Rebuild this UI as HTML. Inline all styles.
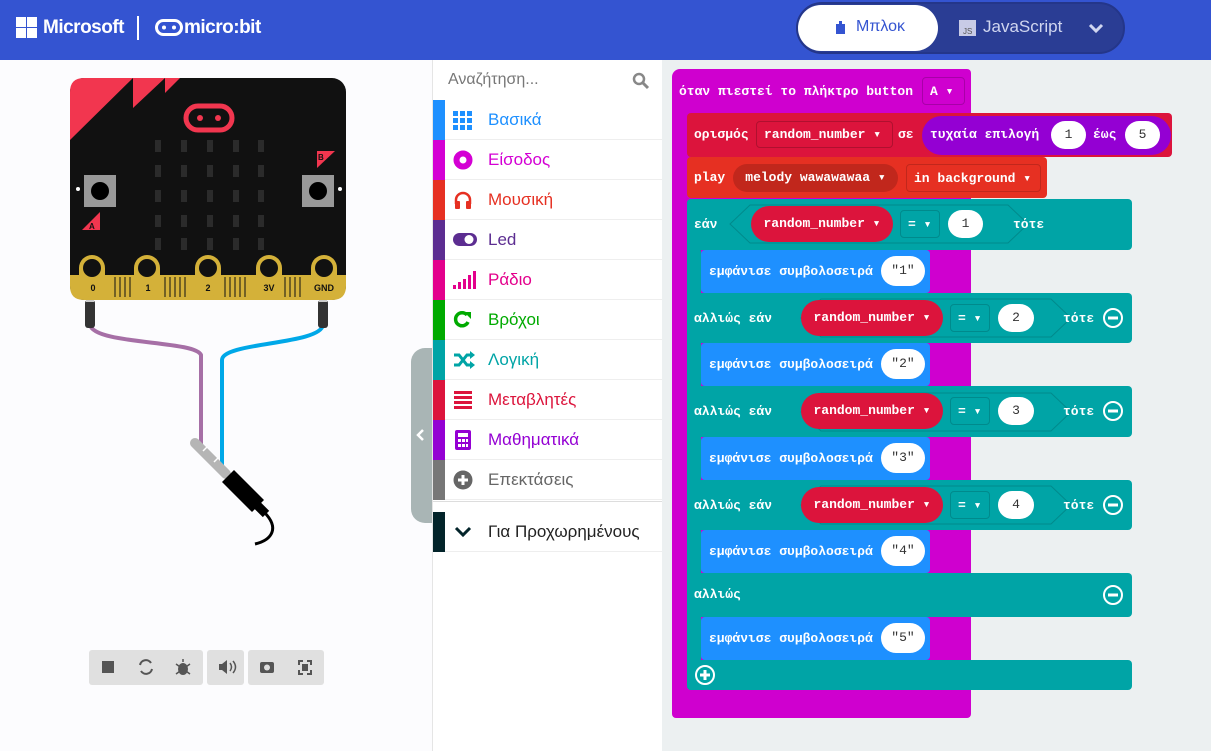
<!DOCTYPE html>
<html><head><meta charset="utf-8"><style>
*{box-sizing:border-box;margin:0;padding:0}
body{width:1211px;height:751px;overflow:hidden;position:relative;font-family:"Liberation Sans","Noto Sans CJK SC",sans-serif;background:#fcfcfe}
.a{position:absolute}
.hdr{left:0;top:0;width:1211px;height:60px;background:#3454d1}
.ws{left:662px;top:60px;width:549px;height:691px;background:#ecf0f1}
.tb{left:432px;top:60px;width:230px;height:691px;background:#fff;border-left:1px solid #e5e5e5}
.it{position:absolute;left:0;width:230px;height:40px;border-bottom:1px solid #eee;font-size:17px;line-height:40px}
.it .s{position:absolute;left:0;top:0;width:12px;height:40px}
.it .t{position:absolute;left:55px}
.it svg{position:absolute;left:20px;top:10px}
.bk{position:absolute;font-family:"Liberation Mono",monospace;font-weight:bold;font-size:13px;color:#fff;white-space:nowrap}
.blk{position:absolute;border-radius:4px}
.pill{position:absolute;border-radius:15px;font-family:"Liberation Mono",monospace;font-weight:bold;font-size:13px;color:#fff;text-align:center;white-space:nowrap}
.wp{background:#fff;color:#333;font-weight:normal}
.dd{position:absolute;border-radius:4px;font-family:"Liberation Mono",monospace;font-weight:bold;font-size:13px;color:#fff;white-space:nowrap;padding-left:7px}
</style></head><body>
<div class="a hdr">
 <svg class="a" style="left:16px;top:17px" width="21" height="21"><rect x="0" y="0" width="10" height="10" fill="#fff"/><rect x="11" y="0" width="10" height="10" fill="#fff"/><rect x="0" y="11" width="10" height="10" fill="#fff"/><rect x="11" y="11" width="10" height="10" fill="#fff"/></svg>
 <div class="a" style="left:43px;top:17px;color:#fff;font-size:19px;font-weight:bold;letter-spacing:-0.5px">Microsoft</div>
 <div class="a" style="left:137px;top:16px;width:2px;height:24px;background:#fff"></div>
 <svg class="a" style="left:155px;top:19px" width="30" height="18"><rect x="1.5" y="1.5" width="25" height="14" rx="7" fill="none" stroke="#fff" stroke-width="3"/><circle cx="9" cy="8.5" r="2" fill="#fff"/><circle cx="19" cy="8.5" r="2" fill="#fff"/></svg>
 <div class="a" style="left:184px;top:17px;color:#fff;font-size:19px;font-weight:bold;letter-spacing:-0.5px">micro:bit</div>
 <div class="a" style="left:796px;top:2px;width:329px;height:52px;border-radius:26px;background:#2a3d94;border:2px solid #24368a"></div>
 <div class="a" style="left:798px;top:5px;width:140px;height:46px;border-radius:23px;background:#fff"></div>
 <svg class="a" style="left:834px;top:20px" width="12" height="15"><path d="M2 4h3V1h3v3h3v10H2z" fill="#3454d1"/></svg>
 <div class="a" style="left:856px;top:18px;color:#3454d1;font-size:16px">Μπλοκ</div>
 <div class="a" style="left:959px;top:20px;width:17px;height:16px;background:#c8cbe6;font-size:8px;color:#555;padding:7px 0 0 4px">JS</div>
 <div class="a" style="left:983px;top:17px;color:#d0d6f0;font-size:17px">JavaScript</div>
 <svg class="a" style="left:1088px;top:22px" width="16" height="12"><path d="M2 3l6 6 6-6" stroke="#d0d6f0" stroke-width="3" fill="none"/></svg>
</div>

<svg class="a" style="left:0;top:60px" width="411" height="691">
 <path d="M90 265 C95 285 195 280 201 295 L201 385" stroke="#a66fa6" stroke-width="4" fill="none"/>
 <path d="M323 265 C320 285 222 282 222 300 L222 412" stroke="#00a8e8" stroke-width="4" fill="none"/>
 <path d="M195 383 L226 414" stroke="#b5b5b5" stroke-width="10" stroke-linecap="round"/>
 <path d="M203 391l4-4M214 402l4-4" stroke="#fff" stroke-width="1.5"/>
 <path d="M228 416 L258 446" stroke="#000" stroke-width="17"/>
 <path d="M255 443 L266 454" stroke="#000" stroke-width="9"/>
 <path d="M264 452 C 280 468 272 480 255 484" stroke="#000" stroke-width="3" fill="none"/>
 <rect x="85" y="240" width="10" height="28" rx="3" fill="#333"/>
 <rect x="318" y="240" width="10" height="28" rx="3" fill="#333"/>
 <rect x="86" y="232" width="8" height="10" fill="#ccc"/><rect x="319" y="232" width="8" height="10" fill="#ccc"/>
 <rect x="70" y="18" width="276" height="222" rx="14" fill="#111"/>
 <path d="M70 32 Q70 18 84 18 L133 18 L70 80Z M133 18 L165 18 L133 48Z M165 18 L180 18 L165 33Z" fill="#f2364f"/>
 <rect x="186" y="46" width="46" height="24" rx="12" fill="none" stroke="#f2364f" stroke-width="5"/>
 <circle cx="200" cy="58" r="3" fill="#f2364f"/><circle cx="218" cy="58" r="3" fill="#f2364f"/>
 <g fill="#2b2b2b">
  <rect x="155" y="80" width="6" height="12"/><rect x="181" y="80" width="6" height="12"/><rect x="207" y="80" width="6" height="12"/><rect x="233" y="80" width="6" height="12"/><rect x="258" y="80" width="6" height="12"/>
  <rect x="155" y="105" width="6" height="12"/><rect x="181" y="105" width="6" height="12"/><rect x="207" y="105" width="6" height="12"/><rect x="233" y="105" width="6" height="12"/><rect x="258" y="105" width="6" height="12"/>
  <rect x="155" y="130" width="6" height="12"/><rect x="181" y="130" width="6" height="12"/><rect x="207" y="130" width="6" height="12"/><rect x="233" y="130" width="6" height="12"/><rect x="258" y="130" width="6" height="12"/>
  <rect x="155" y="155" width="6" height="12"/><rect x="181" y="155" width="6" height="12"/><rect x="207" y="155" width="6" height="12"/><rect x="233" y="155" width="6" height="12"/><rect x="258" y="155" width="6" height="12"/>
  <rect x="155" y="178" width="6" height="12"/><rect x="181" y="178" width="6" height="12"/><rect x="207" y="178" width="6" height="12"/><rect x="233" y="178" width="6" height="12"/><rect x="258" y="178" width="6" height="12"/>
 </g>
 <rect x="84" y="115" width="32" height="32" fill="#999"/><circle cx="100" cy="131" r="9" fill="#000"/>
 <rect x="302" y="115" width="32" height="32" fill="#999"/><circle cx="318" cy="131" r="9" fill="#000"/>
 <circle cx="78" cy="129" r="2" fill="#fff"/><circle cx="340" cy="129" r="2" fill="#fff"/>
 <path d="M82 170 L100 152 L100 170Z" fill="#f2364f"/><text x="89" y="169" font-size="8" font-weight="bold" fill="#111" font-family="Liberation Sans">A</text>
 <path d="M317 91 L335 91 L317 108Z" fill="#f2364f"/><text x="318" y="100" font-size="8" font-weight="bold" fill="#111" font-family="Liberation Sans">B</text>
 <path d="M70 215 L346 215 L346 226 Q346 240 332 240 L84 240 Q70 240 70 226Z" fill="#d4b139"/>
 <g stroke="#111" stroke-width="1"><path d="M115 217v20M120 217v20M125 217v20M130 217v20M165 217v20M170 217v20M175 217v20M180 217v20M185 217v20M225 217v20M230 217v20M235 217v20M240 217v20M245 217v20M285 217v20M290 217v20M295 217v20M300 217v20"/></g>
 <g fill="#d4b139"><rect x="79" y="195" width="26" height="42" rx="13"/><rect x="134" y="195" width="26" height="42" rx="13"/><rect x="195" y="195" width="26" height="42" rx="13"/><rect x="256" y="195" width="26" height="42" rx="13"/><rect x="311" y="195" width="26" height="42" rx="13"/></g>
 <g fill="#111"><circle cx="92" cy="208" r="9"/><circle cx="147" cy="208" r="9"/><circle cx="208" cy="208" r="9"/><circle cx="269" cy="208" r="9"/><circle cx="324" cy="208" r="9"/></g>
 <g font-family="Liberation Sans" font-size="9" font-weight="bold" fill="#111" text-anchor="middle"><text x="93" y="231">0</text><text x="148" y="231">1</text><text x="208" y="231">2</text><text x="269" y="231">3V</text><text x="324" y="231">GND</text></g>
 <rect x="89" y="590" width="114" height="35" rx="3" fill="#e0e0e0"/><rect x="207" y="590" width="37" height="35" rx="3" fill="#e0e0e0"/><rect x="248" y="590" width="76" height="35" rx="3" fill="#e0e0e0"/>
 <rect x="102" y="601" width="12" height="12" fill="#555"/>
 <path d="M140 605a6 6 0 0 1 11-2M152 609a6 6 0 0 1-11 2" stroke="#555" stroke-width="2" fill="none"/>
 <ellipse cx="183" cy="609" rx="5" ry="6" fill="#555"/><path d="M176 604l14 10M176 614l14-10M183 602v-3" stroke="#555" stroke-width="1.5"/>
 <path d="M219 604h3l5-4v14l-5-4h-3z" fill="#555"/><path d="M230 603q3 4 0 8M233 601q5 6 0 12" stroke="#555" stroke-width="1.5" fill="none"/>
 <rect x="260" y="602" width="14" height="11" rx="2" fill="#555"/><circle cx="267" cy="607.5" r="3" fill="#e0e0e0"/>
 <path d="M299 605v-4h4M307 601h4v4M311 610v4h-4M303 614h-4v-4" stroke="#555" stroke-width="2" fill="none"/><rect x="302" y="604" width="6" height="7" fill="#555"/>
</svg>

<div class="a" style="left:411px;top:348px;width:22px;height:175px;background:#a9b5b5;border-radius:14px 0 0 14px"></div>
<svg class="a" style="left:416px;top:428px" width="10" height="14"><path d="M7 2l-5 5 5 5" stroke="#fff" stroke-width="2.5" fill="none"/></svg>

<div class="a tb">
 <div class="a" style="left:15px;top:11px;color:#777;font-size:16px">Αναζήτηση...</div>
 <svg class="a" style="left:199px;top:12px" width="18" height="18"><circle cx="7" cy="7" r="5" stroke="#888" stroke-width="2.5" fill="none"/><path d="M11 11l5 5" stroke="#888" stroke-width="3"/></svg>
 <div class="it" style="top:40px;color:#1e90ff"><div class="s" style="background:#1e90ff"></div><svg width="20" height="20"><g fill="#1e90ff"><rect x="0" y="1" width="5" height="5"/><rect x="7" y="1" width="5" height="5"/><rect x="14" y="1" width="5" height="5"/><rect x="0" y="8" width="5" height="5"/><rect x="7" y="8" width="5" height="5"/><rect x="14" y="8" width="5" height="5"/><rect x="0" y="15" width="5" height="5"/><rect x="7" y="15" width="5" height="5"/><rect x="14" y="15" width="5" height="5"/></g></svg><span class="t">Βασικά</span></div>
 <div class="it" style="top:80px;color:#d400d4"><div class="s" style="background:#d400d4"></div><svg width="20" height="20"><circle cx="10" cy="10" r="6.5" stroke="#d400d4" stroke-width="6" fill="none"/></svg><span class="t">Είσοδος</span></div>
 <div class="it" style="top:120px;color:#e63022"><div class="s" style="background:#e63022"></div><svg width="20" height="20"><path d="M3 14v-4a7 7 0 0 1 14 0v4" stroke="#e63022" stroke-width="2.5" fill="none"/><rect x="2" y="11" width="5" height="8" rx="1" fill="#e63022"/><rect x="13" y="11" width="5" height="8" rx="1" fill="#e63022"/></svg><span class="t">Μουσική</span></div>
 <div class="it" style="top:160px;color:#5c2d91"><div class="s" style="background:#5c2d91"></div><svg width="24" height="20"><rect x="0" y="3" width="24" height="13" rx="6.5" fill="#5c2d91"/><circle cx="16" cy="9.5" r="4.5" fill="#fff"/></svg><span class="t">Led</span></div>
 <div class="it" style="top:200px;color:#e3008c"><div class="s" style="background:#e3008c"></div><svg width="24" height="20"><g fill="#e3008c"><rect x="0" y="15" width="3" height="4"/><rect x="5" y="12" width="3" height="7"/><rect x="10" y="9" width="3" height="10"/><rect x="15" y="5" width="3" height="14"/><rect x="20" y="1" width="3" height="18"/></g></svg><span class="t">Ράδιο</span></div>
 <div class="it" style="top:240px;color:#00aa00"><div class="s" style="background:#00aa00"></div><svg width="20" height="20"><path d="M15 12a6.5 6.5 0 1 1-1-7" stroke="#00aa00" stroke-width="3.5" fill="none"/><path d="M11 2h7v7z" fill="#00aa00"/></svg><span class="t">Βρόχοι</span></div>
 <div class="it" style="top:280px;color:#00a4a6"><div class="s" style="background:#00a4a6"></div><svg width="22" height="20"><path d="M1 5h5l8 10h4M1 15h5l8-10h4" stroke="#00a4a6" stroke-width="3" fill="none"/><path d="M17 1l5 4-5 4zM17 11l5 4-5 4z" fill="#00a4a6"/></svg><span class="t">Λογική</span></div>
 <div class="it" style="top:320px;color:#dc143c"><div class="s" style="background:#dc143c"></div><svg width="20" height="20"><g fill="#dc143c"><rect x="1" y="1" width="18" height="3"/><rect x="1" y="6" width="18" height="3"/><rect x="1" y="11" width="18" height="3"/><rect x="1" y="16" width="18" height="3"/></g></svg><span class="t">Μεταβλητές</span></div>
 <div class="it" style="top:360px;color:#9400d3"><div class="s" style="background:#9400d3"></div><svg width="20" height="20"><rect x="2" y="0" width="16" height="20" rx="2" fill="#9400d3"/><rect x="5" y="3" width="10" height="4" fill="#fff"/><g fill="#fff"><rect x="5" y="9" width="3" height="3"/><rect x="9" y="9" width="3" height="3"/><rect x="13" y="9" width="2" height="3"/><rect x="5" y="14" width="3" height="3"/><rect x="9" y="14" width="3" height="3"/><rect x="13" y="14" width="2" height="3"/></g></svg><span class="t">Μαθηματικά</span></div>
 <div class="it" style="top:400px;color:#666"><div class="s" style="background:#777"></div><svg width="20" height="20"><circle cx="10" cy="10" r="9.5" fill="#666"/><path d="M10 5v10M5 10h10" stroke="#fff" stroke-width="3"/></svg><span class="t">Επεκτάσεις</span></div>
 <div class="a" style="left:0;top:441px;width:230px;border-top:1px solid #ddd"></div>
 <div class="it" style="top:452px;height:40px;color:#222"><div class="s" style="background:#03242a;height:40px"></div><svg width="20" height="20"><path d="M3 6l7 7 7-7" stroke="#03242a" stroke-width="3" fill="none"/></svg><span class="t">Για Προχωρημένους</span></div>
</div>

<div class="a ws"></div>

<div class="blk" style="left:672px;top:69px;width:299px;height:649px;background:#cf00cf;border-radius:8px 4px 4px 4px"></div>
<div class="bk" style="left:679px;top:84px">όταν πιεστεί το πλήκτρο button</div>
<div class="dd" style="left:922px;top:77px;width:43px;height:28px;line-height:28px;border:1px solid #a800a8">A ▾</div>

<div class="blk" style="left:687px;top:113px;width:485px;height:44px;background:#dc143c"></div>
<div class="bk" style="left:694px;top:127px">ορισμός</div>
<div class="dd" style="left:756px;top:121px;width:137px;height:27px;line-height:26px;border:1px solid #b0102f">random_number ▾</div>
<div class="bk" style="left:898px;top:127px">σε</div>
<div class="pill" style="left:922px;top:116px;width:249px;height:39px;border-radius:20px;background:#9400d3"></div>
<div class="bk" style="left:930px;top:127px">τυχαία επιλογή</div>
<div class="pill wp" style="left:1051px;top:121px;width:35px;height:28px;line-height:28px">1</div>
<div class="bk" style="left:1093px;top:127px">έως</div>
<div class="pill wp" style="left:1125px;top:121px;width:35px;height:28px;line-height:28px">5</div>

<div class="blk" style="left:687px;top:157px;width:360px;height:41px;background:#e63022"></div>
<div class="bk" style="left:694px;top:170px">play</div>
<div class="pill" style="left:733px;top:164px;width:165px;height:28px;line-height:28px;background:#c1271c">melody wawawawaa ▾</div>
<div class="dd" style="left:906px;top:164px;width:135px;height:28px;line-height:27px;border:1px solid #c1271c">in background ▾</div>

<div class="blk" style="left:687px;top:199px;width:14px;height:491px;background:#00a4a6"></div>
<div class="blk" style="left:687px;top:199px;width:445px;height:51px;background:#00a4a6"></div>
<div class="blk" style="left:687px;top:293px;width:445px;height:50px;background:#00a4a6"></div>
<div class="blk" style="left:687px;top:386px;width:445px;height:51px;background:#00a4a6"></div>
<div class="blk" style="left:687px;top:480px;width:445px;height:50px;background:#00a4a6"></div>
<div class="blk" style="left:687px;top:573px;width:445px;height:44px;background:#00a4a6"></div>
<div class="blk" style="left:687px;top:660px;width:445px;height:30px;background:#00a4a6"></div>

<svg class="a" style="left:687px;top:199px" width="445" height="491">
 <g fill="none" stroke="#008a8c" stroke-width="1">
  <path d="M63 6h258l20 19-20 19H63L43 25z"/>
  <path d="M134 100h230l20 19-20 19H134l-20-19z"/>
  <path d="M134 194h230l20 19-20 19H134l-20-19z"/>
  <path d="M134 287h230l20 19-20 19H134l-20-19z"/>
 </g>
 <g stroke="#fff" stroke-width="2" fill="none"><circle cx="426" cy="119" r="9"/><circle cx="426" cy="212" r="9"/><circle cx="426" cy="306" r="9"/><circle cx="426" cy="396" r="9"/><circle cx="18" cy="476" r="9"/></g>
 <g stroke="#fff" stroke-width="3"><path d="M421 119h10M421 212h10M421 306h10M421 396h10M13 476h10M18 471v10"/></g>
</svg>
<div class="bk" style="left:694px;top:217px">εάν</div>
<div class="pill" style="left:751px;top:206px;width:142px;height:36px;line-height:36px;border-radius:18px;background:#dc143c">random_number ▾</div>
<div class="dd" style="left:900px;top:210px;width:40px;height:28px;line-height:28px;border:1px solid #008a8c">= ▾</div>
<div class="pill wp" style="left:948px;top:210px;width:35px;height:28px;line-height:28px">1</div>
<div class="bk" style="left:1013px;top:217px">τότε</div>

<div class="bk" style="left:694px;top:311px">αλλιώς εάν</div>
<div class="pill" style="left:801px;top:300px;width:142px;height:36px;line-height:36px;border-radius:18px;background:#dc143c">random_number ▾</div>
<div class="dd" style="left:950px;top:304px;width:40px;height:28px;line-height:28px;border:1px solid #008a8c">= ▾</div>
<div class="pill wp" style="left:998px;top:304px;width:36px;height:28px;line-height:28px">2</div>
<div class="bk" style="left:1063px;top:311px">τότε</div>

<div class="bk" style="left:694px;top:404px">αλλιώς εάν</div>
<div class="pill" style="left:801px;top:393px;width:142px;height:36px;line-height:36px;border-radius:18px;background:#dc143c">random_number ▾</div>
<div class="dd" style="left:950px;top:397px;width:40px;height:28px;line-height:28px;border:1px solid #008a8c">= ▾</div>
<div class="pill wp" style="left:998px;top:397px;width:36px;height:28px;line-height:28px">3</div>
<div class="bk" style="left:1063px;top:404px">τότε</div>

<div class="bk" style="left:694px;top:498px">αλλιώς εάν</div>
<div class="pill" style="left:801px;top:487px;width:142px;height:36px;line-height:36px;border-radius:18px;background:#dc143c">random_number ▾</div>
<div class="dd" style="left:950px;top:491px;width:40px;height:28px;line-height:28px;border:1px solid #008a8c">= ▾</div>
<div class="pill wp" style="left:998px;top:491px;width:36px;height:28px;line-height:28px">4</div>
<div class="bk" style="left:1063px;top:498px">τότε</div>

<div class="bk" style="left:694px;top:587px">αλλιώς</div>

<div class="blk" style="left:701px;top:250px;width:229px;height:43px;background:#1e90ff"></div>
<div class="bk" style="left:709px;top:264px">εμφάνισε συμβολοσειρά</div>
<div class="pill wp" style="left:881px;top:256px;width:44px;height:30px;line-height:30px">"1"</div>
<div class="blk" style="left:701px;top:343px;width:229px;height:43px;background:#1e90ff"></div>
<div class="bk" style="left:709px;top:357px">εμφάνισε συμβολοσειρά</div>
<div class="pill wp" style="left:881px;top:349px;width:44px;height:30px;line-height:30px">"2"</div>
<div class="blk" style="left:701px;top:437px;width:229px;height:43px;background:#1e90ff"></div>
<div class="bk" style="left:709px;top:451px">εμφάνισε συμβολοσειρά</div>
<div class="pill wp" style="left:881px;top:443px;width:44px;height:30px;line-height:30px">"3"</div>
<div class="blk" style="left:701px;top:530px;width:229px;height:43px;background:#1e90ff"></div>
<div class="bk" style="left:709px;top:544px">εμφάνισε συμβολοσειρά</div>
<div class="pill wp" style="left:881px;top:536px;width:44px;height:30px;line-height:30px">"4"</div>
<div class="blk" style="left:701px;top:617px;width:229px;height:43px;background:#1e90ff"></div>
<div class="bk" style="left:709px;top:631px">εμφάνισε συμβολοσειρά</div>
<div class="pill wp" style="left:881px;top:623px;width:44px;height:30px;line-height:30px">"5"</div>
</body></html>
